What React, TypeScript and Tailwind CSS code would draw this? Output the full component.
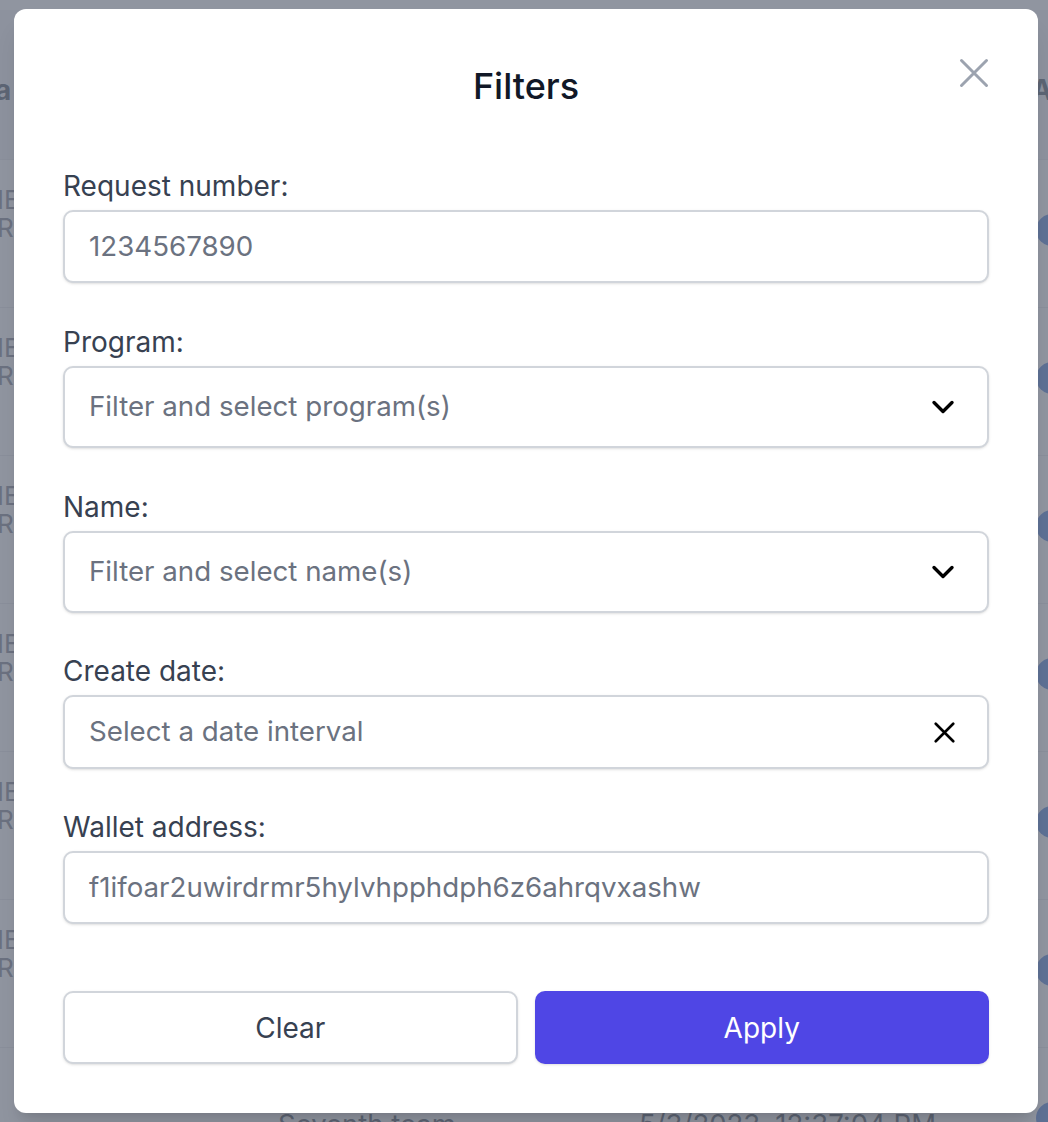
import React from 'react';

const rows = [0, 1, 2, 3, 4, 5];

function ChevronDown() {
  return (
    <svg width="24" height="24" viewBox="0 0 24 24" fill="none" stroke="#000" strokeWidth="3.4" strokeLinecap="round" strokeLinejoin="round">
      <path d="M3 7.5l9 9 9-9" />
    </svg>
  );
}

function CloseIcon({ size, color, width }: { size: number; color: string; width: number }) {
  return (
    <svg width={size} height={size} viewBox="0 0 24 24" fill="none" stroke={color} strokeWidth={width} strokeLinecap="round">
      <path d="M2 2l20 20M22 2L2 22" />
    </svg>
  );
}

function Field({ label, className, children }: { label: string; className?: string; children: React.ReactNode }) {
  return (
    <div className={className}>
      <div className="h-[36px] text-[28px] leading-[36px] text-[#374151]">{label}</div>
      <div className="mt-[6px]">{children}</div>
    </div>
  );
}

function Box({ h, text, icon }: { h: string; text: string; icon?: React.ReactNode }) {
  return (
    <div className={`${h} flex items-center justify-between rounded-[10px] border-2 border-[#d1d5db] bg-white pl-[24px] pr-[32px] shadow-sm`}>
      <span className="text-[27.7px] text-[#6b7280]">{text}</span>
      {icon}
    </div>
  );
}

export default function App() {
  return (
    <div className="relative h-[1122px] w-[1048px] overflow-hidden bg-white font-['Inter',sans-serif]">
      {/* page behind the dialog */}
      <div className="pt-[10px]">
        <div className="flex h-[150px] items-center justify-between border-b border-[#e5e7eb] bg-[#f3f4f6] pt-[10px] text-[28px] font-bold text-[#374151]">
          <span className="-ml-[16px]">ra</span>
          <span className="-mr-[30px]">Am</span>
        </div>
        {rows.map((r) => (
          <div key={r} className="flex h-[148px] items-start justify-between border-b border-[#e5e7eb]">
            <div className="-ml-[3px] pt-[26px] text-[26px] leading-[28px] text-[#6b7280]">
              <div>IE</div>
              <div>RA</div>
            </div>
            <div className="-mr-[20px] mt-[54px] h-[32px] w-[32px] rounded-full bg-[#3b6fd4]" />
          </div>
        ))}
        <div className="flex h-[148px] justify-between">
          <div className="flex pt-[56px] text-[27.5px] text-[#374151]">
            <span className="ml-[278px]">Seventh team</span>
            <span className="ml-[183px]">5/3/2023, 12:37:04 PM</span>
          </div>
          <div className="-mr-[20px] mt-[54px] h-[32px] w-[32px] rounded-full bg-[#3b6fd4]" />
        </div>
      </div>

      {/* overlay */}
      <div className="absolute inset-0 bg-[#6b7280]/75" />

      {/* dialog */}
      <div className="absolute inset-0 pl-[14px] pt-[9px]">
        <div className="relative h-[1104px] w-[1024px] rounded-[12px] bg-white px-[49px] pt-[57px] shadow-xl">
          <button className="absolute right-[49px] top-[49px] flex h-[30px] w-[30px] items-center justify-center">
            <CloseIcon size={30} color="#9ca3af" width={2.4} />
          </button>
          <h2 className="h-[40px] text-center text-[36px] font-medium leading-[40px] text-[#111827]">Filters</h2>

          <Field label="Request number:" className="mt-[62px]">
            <Box h="h-[73px]" text="1234567890" />
          </Field>
          <Field label="Program:" className="mt-[41px]">
            <Box h="h-[82px]" text="Filter and select program(s)" icon={<ChevronDown />} />
          </Field>
          <Field label="Name:" className="mt-[41px]">
            <Box h="h-[82px]" text="Filter and select name(s)" icon={<ChevronDown />} />
          </Field>
          <Field label="Create date:" className="mt-[40px]">
            <Box h="h-[74px]" text="Select a date interval" icon={<CloseIcon size={21} color="#000" width={3} />} />
          </Field>
          <Field label="Wallet address:" className="mt-[40px]">
            <Box h="h-[73px]" text="f1ifoar2uwirdrmr5hylvhpphdph6z6ahrqvxashw" />
          </Field>

          <div className="mt-[67px] grid grid-cols-2 gap-[17px]">
            <button className="h-[73px] rounded-[10px] border-2 border-[#d1d5db] bg-white text-[28px] text-[#374151] shadow-sm">
              Clear
            </button>
            <button className="h-[73px] rounded-[10px] bg-[#4f46e5] text-[28px] text-white shadow-sm">
              Apply
            </button>
          </div>
        </div>
      </div>
    </div>
  );
}
